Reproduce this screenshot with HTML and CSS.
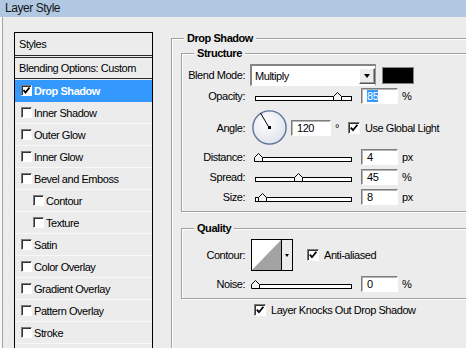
FILE: index.html
```html
<!DOCTYPE html>
<html lang="en">
  <head>
    <meta charset="UTF-8" />
    <title>Layer Style</title>
    <link rel="stylesheet" href="styles.css">
  </head>
  <body>
    <div class="window">
      <div class="titlebar">Layer Style</div>
      <div class="main">
        <ul class="styles-list">
          <li class="head">Styles</li>
          <li class="blend">Blending Options: Custom</li>
          <li class="item selected">
            <span class="check"><svg viewBox="0 0 9 9" width="9" height="9"><path d="M1.5 4L3.5 6.5L7.5 1.5" /></svg></span>Drop Shadow
          </li>
          <li class="item"><span class="check"></span>Inner Shadow</li>
          <li class="item"><span class="check"></span>Outer Glow</li>
          <li class="item"><span class="check"></span>Inner Glow</li>
          <li class="item"><span class="check"></span>Bevel and Emboss</li>
          <li class="item sub"><span class="check"></span>Contour</li>
          <li class="item sub"><span class="check"></span>Texture</li>
          <li class="item"><span class="check"></span>Satin</li>
          <li class="item"><span class="check"></span>Color Overlay</li>
          <li class="item"><span class="check"></span>Gradient Overlay</li>
          <li class="item"><span class="check"></span>Pattern Overlay</li>
          <li class="item"><span class="check"></span>Stroke</li>
        </ul>

        <div class="settings">
          <fieldset class="group outer">
            <legend>Drop Shadow</legend>

            <fieldset class="group structure">
              <legend>Structure</legend>
              <div class="row blend-row">
                <span class="label">Blend Mode:</span>
                <div class="select">
                  <span class="select-text">Multiply</span>
                  <span class="btn"><span class="arrow"></span></span>
                </div>
                <div class="swatch"></div>
              </div>
              <div class="row opacity-row">
                <span class="label">Opacity:</span>
                <div class="slider">
                  <div class="track"></div>
                  <svg class="thumb" style="left: 83px" viewBox="0 0 9 9" width="9" height="9"><path d="M0.5 8.5V4.5L4.5 0.5L8.5 4.5V8.5Z" /></svg>
                </div>
                <div class="field"><span class="sel">85</span></div>
                <span class="unit">%</span>
              </div>
              <div class="row angle-row">
                <span class="label">Angle:</span>
                <svg class="dial" viewBox="0 0 35 35" width="35" height="35">
                  <defs>
                    <radialGradient id="dial-fill" cx="0.4" cy="0.35" r="0.7">
                      <stop offset="0" stop-color="#ffffff" />
                      <stop offset="1" stop-color="#dfe2ea" />
                    </radialGradient>
                  </defs>
                  <circle cx="17.5" cy="17.5" r="16.6" fill="url(#dial-fill)" stroke="#5b739b" stroke-width="1.4" />
                  <line x1="17" y1="17.5" x2="8.5" y2="3" stroke="#000" stroke-width="1" />
                  <rect x="16" y="16" width="3" height="3" fill="#000" />
                </svg>
                <div class="field angle-field">120</div>
                <span class="degree">°</span>
                <span class="check big"><svg viewBox="0 0 10 10" width="10" height="10"><path d="M1.8 4.6L4 7.2L8.4 1.8" /></svg></span>
                <span class="check-label">Use Global Light</span>
              </div>
              <div class="row metric-row">
                <span class="label">Distance:</span>
                <div class="slider">
                  <div class="track"></div>
                  <svg class="thumb" style="left: 4px" viewBox="0 0 9 9" width="9" height="9"><path d="M0.5 8.5V4.5L4.5 0.5L8.5 4.5V8.5Z" /></svg>
                </div>
                <div class="field">4</div>
                <span class="unit">px</span>
              </div>
              <div class="row metric-row">
                <span class="label">Spread:</span>
                <div class="slider">
                  <div class="track"></div>
                  <svg class="thumb" style="left: 44px" viewBox="0 0 9 9" width="9" height="9"><path d="M0.5 8.5V4.5L4.5 0.5L8.5 4.5V8.5Z" /></svg>
                </div>
                <div class="field">45</div>
                <span class="unit">%</span>
              </div>
              <div class="row metric-row">
                <span class="label">Size:</span>
                <div class="slider">
                  <div class="track"></div>
                  <svg class="thumb" style="left: 8px" viewBox="0 0 9 9" width="9" height="9"><path d="M0.5 8.5V4.5L4.5 0.5L8.5 4.5V8.5Z" /></svg>
                </div>
                <div class="field">8</div>
                <span class="unit">px</span>
              </div>
            </fieldset>

            <fieldset class="group quality">
              <legend>Quality</legend>
              <div class="row contour-row">
                <span class="label">Contour:</span>
                <div class="contour">
                  <svg width="29" height="30" viewBox="0 0 29 30"><polygon points="0,30 29,0 29,30" fill="#a3a3a3" /></svg>
                  <span class="btn"><span class="arrow small"></span></span>
                </div>
                <span class="check big anti"><svg viewBox="0 0 10 10" width="10" height="10"><path d="M1.8 4.6L4 7.2L8.4 1.8" /></svg></span>
                <span class="check-label">Anti-aliased</span>
              </div>
              <div class="row noise-row">
                <span class="label">Noise:</span>
                <div class="slider">
                  <div class="track"></div>
                  <svg class="thumb" style="left: 1px" viewBox="0 0 9 9" width="9" height="9"><path d="M0.5 8.5V4.5L4.5 0.5L8.5 4.5V8.5Z" /></svg>
                </div>
                <div class="field">0</div>
                <span class="unit">%</span>
              </div>
            </fieldset>

            <div class="knockout">
              <span class="check big"><svg viewBox="0 0 10 10" width="10" height="10"><path d="M1.8 4.6L4 7.2L8.4 1.8" /></svg></span>
              <span class="check-label">Layer Knocks Out Drop Shadow</span>
            </div>
          </fieldset>
        </div>
      </div>
    </div>
  </body>
</html>
```

FILE: styles.css
```css
* {
  box-sizing: border-box;
}

html,
body {
  margin: 0;
  padding: 0;
  height: 100%;
  overflow: hidden;
}

body {
  font-family: "Liberation Sans", Arial, sans-serif;
  font-size: 11px;
  letter-spacing: -0.45px;
  color: #000;
  background-color: #ececec;
}

.window {
  display: flex;
  flex-direction: column;
  width: 466px;
  height: 348px;
  overflow: hidden;
  background-color: #f7f7f7;
}

.titlebar {
  height: 17px;
  line-height: 17px;
  padding-left: 5px;
  font-size: 12px;
  color: #151515;
  background-color: #b0c8e2;
}

.main {
  flex: 1;
  display: flex;
  align-items: flex-start;
  min-height: 0;
  overflow: hidden;
  margin-left: 2px;
  padding: 15px 0 0 11px;
  border-left: 1px solid #a3a3a3;
  background-color: #ececec;
}

/* styles list on the left */
.styles-list {
  list-style: none;
  margin: 0;
  padding: 0;
  width: 139px;
  height: 316px;
  flex-shrink: 0;
  border: 1px solid #000;
  border-bottom: none;
}

.styles-list li {
  display: flex;
  align-items: center;
}

.styles-list .head {
  height: 25px;
  padding-left: 4px;
  border-bottom: 3px double #2a2a2a;
}

.styles-list .blend {
  height: 21px;
  padding-left: 4px;
  margin-bottom: 1px;
  border-bottom: 1px solid #2a2a2a;
}

.styles-list .item {
  height: 22px;
  padding-left: 6px;
  border-bottom: 1px solid #f8f8f8;
}

.styles-list .item.sub {
  padding-left: 18px;
}

.styles-list .item.selected {
  color: #fff;
  font-weight: bold;
  background-color: #3399ff;
  border-bottom-color: #3399ff;
}

.check {
  display: flex;
  flex-shrink: 0;
  width: 11px;
  height: 11px;
  margin-right: 2px;
  background-color: #fff;
  border: 1px solid;
  border-color: #7a7a7a #fff #fff #7a7a7a;
  box-shadow: inset 1px 1px 0 #333;
}

.check path {
  fill: none;
  stroke: #000;
  stroke-width: 1.8;
}

.check.big {
  width: 12px;
  height: 12px;
  margin-right: 0;
}

.check-label {
  margin-left: 5px;
}

/* settings on the right */
.settings {
  width: 330px;
  margin-left: 18px;
  flex-shrink: 0;
}

fieldset.group {
  margin: 0;
  padding: 0;
  min-width: 0;
  border: 1px solid #a0a0a0;
  box-shadow: inset 1px 1px 0 #fff, 1px 1px 0 #fff;
}

fieldset.group legend {
  padding: 0 3px;
  margin-left: 12px;
  font-weight: bold;
  line-height: 13px;
  background-color: #ececec;
}

.outer {
  height: 320px;
  padding-left: 9px !important;
}

.outer > legend {
  margin-left: 3px !important;
}

.structure {
  margin-top: 2px !important;
  padding: 4px 0 6px !important;
}

.quality {
  margin-top: 10px !important;
  padding: 4px 0 6px !important;
}

.row {
  display: flex;
  align-items: center;
}

.row .label {
  width: 63px;
  margin-right: 5px;
  flex-shrink: 0;
  text-align: right;
}

.blend-row {
  height: 22px;
}

.opacity-row {
  height: 16px;
  margin-top: 2px;
}

.angle-row {
  height: 35px;
  margin-top: 6px;
}

.metric-row {
  height: 16px;
  margin-top: 4px;
}

.contour-row {
  height: 32px;
}

.noise-row {
  height: 16px;
  margin-top: 5px;
}

.select {
  display: flex;
  align-items: center;
  width: 126px;
  height: 22px;
  padding: 1px 0 1px 1px;
  background-color: #fff;
  border-style: solid;
  border-width: 2px 1px 1px 2px;
  border-color: #858585 #9a9a9a #fff #858585;
}

.select-text {
  padding-left: 2px;
}

.btn {
  display: flex;
  align-items: center;
  justify-content: center;
  background-color: #ececec;
}

.select .btn {
  margin-left: auto;
  width: 16px;
  height: 16px;
  border: 1px solid;
  border-color: #fff #555 #555 #fff;
  box-shadow: inset -1px -1px 0 #a0a0a0;
}

.arrow {
  width: 0;
  height: 0;
  border-top: 4px solid #000;
  border-left: 3.5px solid transparent;
  border-right: 3.5px solid transparent;
}

.arrow.small {
  border-top-width: 3px;
  border-left-width: 2.5px;
  border-right-width: 2.5px;
}

.swatch {
  width: 32px;
  height: 17px;
  margin-left: 6px;
  background-color: #000;
  border: 1px solid #858585;
}

.slider {
  position: relative;
  display: flex;
  align-items: flex-end;
  width: 107px;
  height: 16px;
  padding: 0 5px 3px;
}

.track {
  flex: 1;
  height: 5px;
  background-color: #fff;
  border: 1px solid #000;
}

.thumb {
  position: absolute;
  bottom: 3px;
}

.thumb path {
  fill: #f4f4f4;
  stroke: #000;
  stroke-width: 1;
}

.field {
  display: flex;
  align-items: center;
  width: 37px;
  height: 16px;
  margin-left: 4px;
  padding-left: 5px;
  background-color: #fff;
  border: 1px solid;
  border-color: #7d7d7d #fff #fff #7d7d7d;
  box-shadow: inset 1px 1px 0 #b5b5b5;
}

.field .sel {
  color: #fff;
  background-color: #3399ff;
}

.unit {
  margin-left: 4px;
}

.dial {
  margin-left: 2px;
}

.angle-field {
  width: 40px;
}

.degree {
  margin-left: 4px;
  margin-right: 9px;
}

.contour {
  display: flex;
  width: 42px;
  height: 32px;
  margin-left: 1px;
  background-color: #fff;
  border: 1px solid #000;
}

.contour .btn {
  flex: 1;
  border-left: 1px solid #000;
}

.anti {
  margin-left: 14px;
}

.knockout {
  display: flex;
  align-items: center;
  height: 12px;
  margin-top: 5px;
  padding-left: 73px;
}
```
